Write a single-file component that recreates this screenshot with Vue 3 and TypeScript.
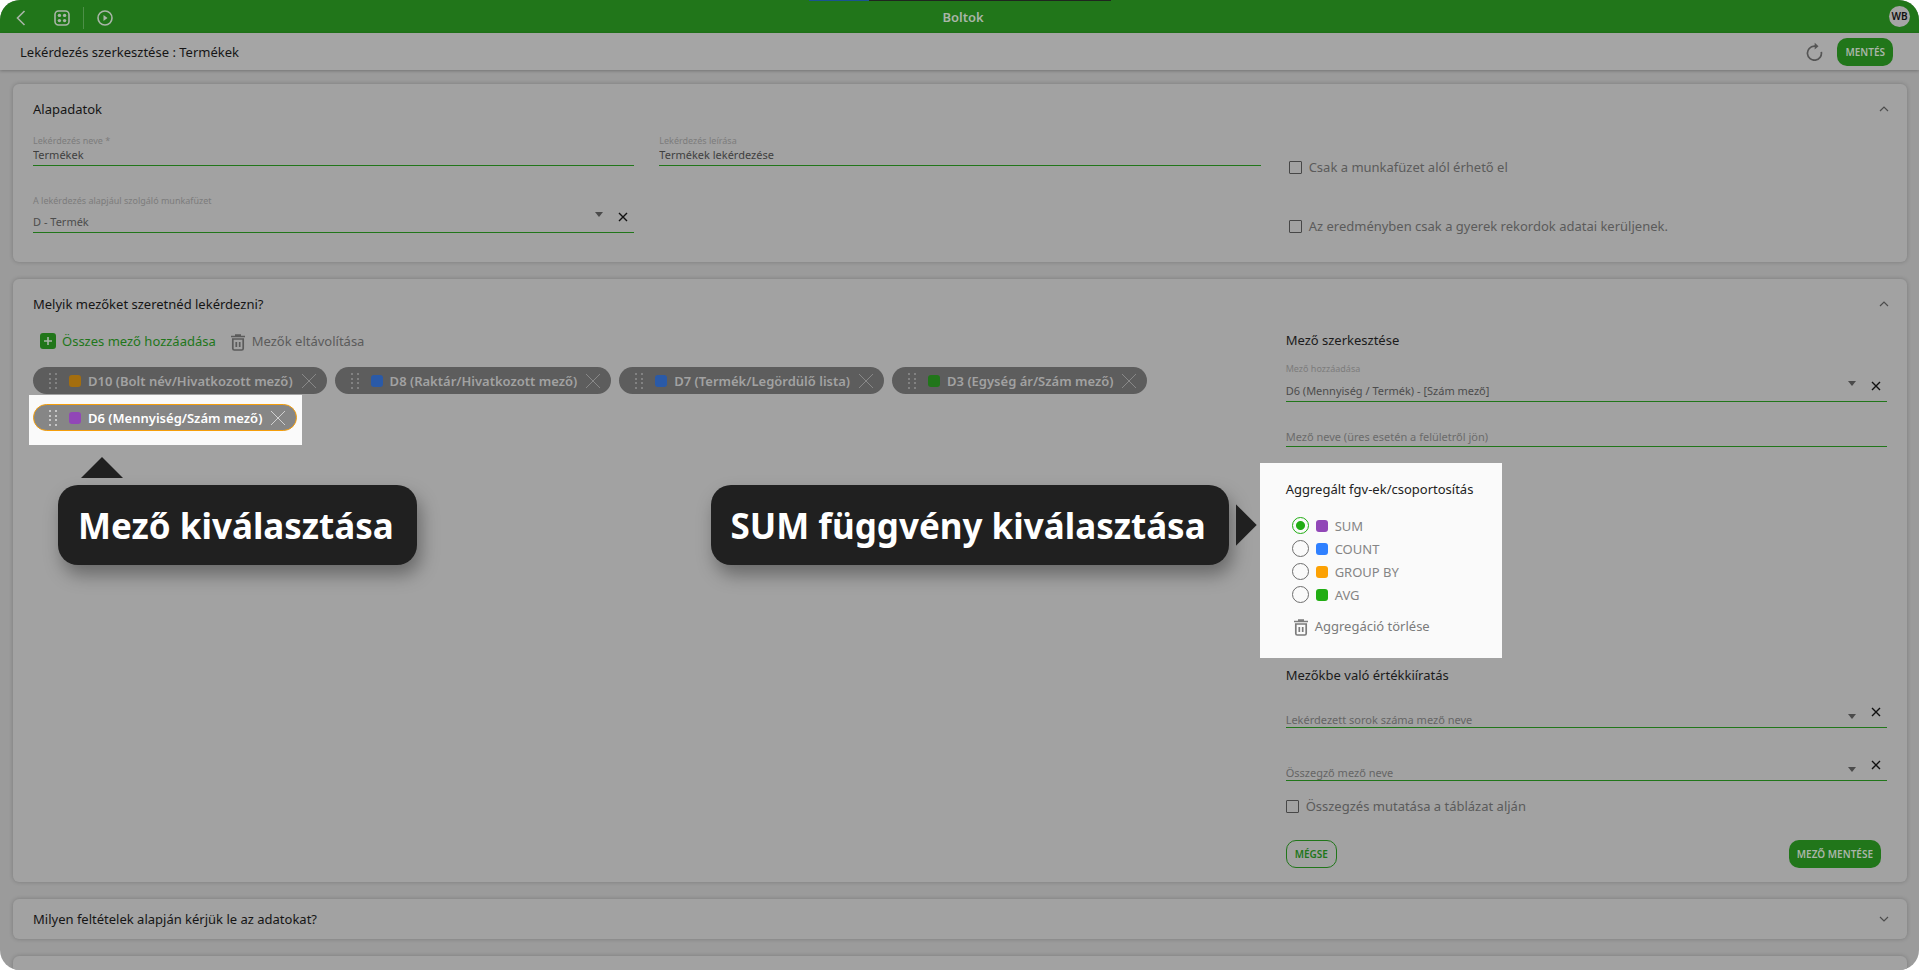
<script setup lang="ts">
import { ref } from 'vue'

interface Chip { text: string; color: string; selected?: boolean }

const chips: Chip[] = [
  { text: 'D10 (Bolt név/Hivatkozott mező)', color: 'orange' },
  { text: 'D8 (Raktár/Hivatkozott mező)', color: 'blue' },
  { text: 'D7 (Termék/Legördülő lista)', color: 'blue' },
  { text: 'D3 (Egység ár/Szám mező)', color: 'green' },
  { text: 'D6 (Mennyiség/Szám mező)', color: 'purple', selected: true },
]
const aggregates = [
  { name: 'SUM', color: 'purple' },
  { name: 'COUNT', color: 'blue' },
  { name: 'GROUP BY', color: 'orange' },
  { name: 'AVG', color: 'green' },
]
const aggregate = ref('SUM')
const queryName = ref('Termékek')
const description = ref('Termékek lekérdezése')
const fieldName = ref('')
const onlyWorkbook = ref(false)
const onlyChildren = ref(false)
const showTotal = ref(false)
</script>

<template>
  <div class="screen">
    <div class="strip" aria-hidden="true"><i></i></div>
    <header class="topbar">
      <nav class="tools">
        <button class="icon-btn back" aria-label="Vissza">
          <svg width="10" height="16" viewBox="0 0 10 16"><path d="M8.500 1 1.500 8l7 7" /></svg>
        </button>
        <button class="icon-btn grid" aria-label="Alkalmazások">
          <svg width="16" height="16" viewBox="0 0 16 16"><rect x="1" y="1" width="14" height="14" rx="3.500" /><g class="solid"><circle cx="5.400" cy="5.400" r="1.700" /><circle cx="10.600" cy="5.400" r="1.700" /><circle cx="5.400" cy="10.600" r="1.700" /><circle cx="10.600" cy="10.600" r="1.700" /></g></svg>
        </button>
        <button class="icon-btn play" aria-label="Futtatás">
          <svg width="16" height="16" viewBox="0 0 16 16"><circle cx="8" cy="8" r="7" /><path class="solid" d="M6.500 5v6l4-3z" /></svg>
        </button>
      </nav>
      <span class="app-name">Boltok</span>
      <span class="right"><span class="avatar">WB</span></span>
    </header>

    <div class="subbar">
      <h1>Lekérdezés szerkesztése : Termékek</h1>
      <div class="actions">
        <button class="icon-btn refresh" aria-label="Frissítés">
          <svg width="17" height="19" viewBox="0 0 17 19"><path d="M15.300 9.800A7 7 0 1 1 8.300 4.200h2" /><path class="solid" d="M8.700 .8v6.800l3.800-3.400z" /></svg>
        </button>
        <button class="btn filled">MENTÉS</button>
      </div>
    </div>

    <main>
      <section class="card basics">
        <div class="card-head">
          <h2>Alapadatok</h2>
          <button class="icon-btn" aria-label="Összecsukás"><svg class="chev" width="10" height="6" viewBox="0 0 10 6"><path d="M1 5l4-4 4 4" /></svg></button>
        </div>
        <div class="columns basics-grid">
          <div class="field">
            <label for="qname">Lekérdezés neve *</label>
            <input id="qname" v-model="queryName" type="text" />
          </div>
          <div class="field">
            <label for="qdesc">Lekérdezés leírása</label>
            <input id="qdesc" v-model="description" type="text" />
          </div>
          <label class="check"><input v-model="onlyWorkbook" type="checkbox" />Csak a munkafüzet alól érhető el</label>
          <div class="field tall">
            <label for="book">A lekérdezés alapjául szolgáló munkafüzet</label>
            <div class="pick">
              <select id="book"><option>D - Termék</option></select>
              <svg class="caret" width="8" height="5" viewBox="0 0 8 5"><path d="M0 0h8L4 5z" /></svg>
              <button class="icon-btn clear" aria-label="Törlés"><svg width="10" height="10" viewBox="0 0 10 10"><path d="M1 1l8 8M9 1L1 9" /></svg></button>
            </div>
          </div>
          <span></span>
          <label class="check"><input v-model="onlyChildren" type="checkbox" />Az eredményben csak a gyerek rekordok adatai kerüljenek.</label>
        </div>
      </section>

      <section class="card fields">
        <div class="card-head">
          <h2>Melyik mezőket szeretnéd lekérdezni?</h2>
          <button class="icon-btn" aria-label="Összecsukás"><svg class="chev" width="10" height="6" viewBox="0 0 10 6"><path d="M1 5l4-4 4 4" /></svg></button>
        </div>
        <div class="columns">
          <div class="selected-fields">
            <div class="links">
              <button class="link add">
                <svg width="16" height="16" viewBox="0 0 16 16"><rect width="16" height="16" rx="3" /><path d="M8 4v8M4 8h8" /></svg>Összes mező hozzáadása
              </button>
              <button class="link">
                <svg class="trash" width="14" height="17" viewBox="0 0 14 17"><path d="M0 2.500h14M4 1h6" /><path d="M1.800 5v9.500q0 1.500 1.500 1.500h7.400q1.500 0 1.500-1.500V5z" /><path d="M5.300 8v5M8.700 8v5" /></svg>Mezők eltávolítása
              </button>
            </div>
            <ul class="chips">
              <li v-for="chip in chips" :key="chip.text" class="chip" :class="{ selected: chip.selected }">
                <svg class="grip" width="10" height="18" viewBox="0 0 10 18"><path d="M0 2h2M6 2h2M0 7h2M6 7h2M0 11h2M6 11h2M0 16h2M6 16h2" /></svg>
                <i class="swatch" :class="chip.color"></i>
                <span class="chip-text">{{ chip.text }}</span>
                <button class="icon-btn" aria-label="Eltávolítás"><svg class="cross" width="16" height="16" viewBox="0 0 16 16"><path d="M1 1l14 14M15 1L1 15" /></svg></button>
                <div v-if="chip.selected" class="tip below">Mező kiválasztása</div>
              </li>
            </ul>
          </div>

          <form class="editor" @submit.prevent>
            <h3>Mező szerkesztése</h3>
            <div class="field tall">
              <label for="field">Mező hozzáadása</label>
              <div class="pick">
                <select id="field"><option>D6 (Mennyiség / Termék) - [Szám mező]</option></select>
                <svg class="caret" width="8" height="5" viewBox="0 0 8 5"><path d="M0 0h8L4 5z" /></svg>
                <button type="button" class="icon-btn clear" aria-label="Törlés"><svg width="10" height="10" viewBox="0 0 10 10"><path d="M1 1l8 8M9 1L1 9" /></svg></button>
              </div>
            </div>
            <input v-model="fieldName" class="name-input" type="text" placeholder="Mező neve (üres esetén a felületről jön)" aria-label="Mező neve" />

            <fieldset class="aggregates">
              <legend>Aggregált fgv-ek/csoportosítás</legend>
              <label v-for="item in aggregates" :key="item.name" class="radio">
                <input v-model="aggregate" type="radio" name="aggregate" :value="item.name" />
                <i class="swatch" :class="item.color"></i>{{ item.name }}
              </label>
              <button type="button" class="link">
                <svg class="trash" width="14" height="17" viewBox="0 0 14 17"><path d="M0 2.500h14M4 1h6" /><path d="M1.800 5v9.500q0 1.500 1.500 1.500h7.400q1.500 0 1.500-1.500V5z" /><path d="M5.300 8v5M8.700 8v5" /></svg>Aggregáció törlése
              </button>
              <div class="tip beside">SUM függvény kiválasztása</div>
            </fieldset>

            <h3>Mezőkbe való értékkiíratás</h3>
            <div class="pick empty first">
              <select aria-label="Lekérdezett sorok száma mező neve"><option>Lekérdezett sorok száma mező neve</option></select>
              <svg class="caret" width="8" height="5" viewBox="0 0 8 5"><path d="M0 0h8L4 5z" /></svg>
              <button type="button" class="icon-btn clear" aria-label="Törlés"><svg width="10" height="10" viewBox="0 0 10 10"><path d="M1 1l8 8M9 1L1 9" /></svg></button>
            </div>
            <div class="pick empty">
              <select aria-label="Összegző mező neve"><option>Összegző mező neve</option></select>
              <svg class="caret" width="8" height="5" viewBox="0 0 8 5"><path d="M0 0h8L4 5z" /></svg>
              <button type="button" class="icon-btn clear" aria-label="Törlés"><svg width="10" height="10" viewBox="0 0 10 10"><path d="M1 1l8 8M9 1L1 9" /></svg></button>
            </div>
            <label class="check total"><input v-model="showTotal" type="checkbox" />Összegzés mutatása a táblázat alján</label>
            <div class="form-actions">
              <button type="button" class="btn outline">MÉGSE</button>
              <button type="submit" class="btn filled">MEZŐ MENTÉSE</button>
            </div>
          </form>
        </div>
      </section>

      <section class="card closed">
        <h2>Milyen feltételek alapján kérjük le az adatokat?</h2>
        <button class="icon-btn" aria-label="Kinyitás"><svg class="chev" width="10" height="6" viewBox="0 0 10 6"><path d="M1 1l4 4 4-4" /></svg></button>
      </section>
      <section class="card closed"></section>
    </main>
  </div>
</template>

<style>
body { margin: 0; background: #fff; }
</style>

<style scoped>
* { box-sizing: border-box; }
.screen {
  --green: #21761a;
  position: relative;
  height: 100vh;
  overflow: hidden;
  border-radius: 20px;
  background: #9b9b9b;
  color: #151515;
  font-family: "Noto Sans", "Open Sans", sans-serif;
  font-size: 13px;
  line-height: 20px;
}
button, input, select { font: inherit; color: inherit; margin: 0; padding: 0; border: 0; background: none; border-radius: 0; }
button { cursor: pointer; }
h1, h2, h3 { margin: 0; font-size: 13px; font-weight: 400; line-height: 20px; }
svg { display: block; flex: none; fill: none; stroke: currentColor; }
.solid { fill: currentColor; stroke: none; }
.icon-btn { display: flex; align-items: center; justify-content: center; flex: none; }

.strip { position: absolute; top: 0; left: calc(50% - 151px); width: 302px; height: 1px; background: #1f261f; }
.strip i { display: block; width: 60px; height: 1px; background: #1a5391; }
.topbar { display: grid; grid-template-columns: 1fr auto 1fr; align-items: center; height: 33px; padding: 0 9px 0 16px; background: var(--green); color: #a9b5a8; }
.tools { display: flex; align-items: center; padding-top: 2px; }
.tools svg { stroke-width: 1.600; }
.grid { margin-left: 28px; padding-right: 13px; height: 22px; border-right: 1px solid #4d8f48; }
.play { margin-left: 13px; }
.app-name { font-weight: 600; }
.right { display: flex; justify-content: flex-end; }
.avatar { width: 21px; height: 21px; border-radius: 50%; background: #a5a5a5; color: #111; font-size: 10px; font-weight: 600; line-height: 21px; text-align: center; }
.subbar { position: relative; display: flex; align-items: center; justify-content: space-between; height: 37px; padding: 0 26px 0 20px; background: #a5a5a5; box-shadow: 0 1px 3px rgba(0, 0, 0, .25); }
.actions { display: flex; align-items: center; gap: 14px; }
.refresh { color: #555; }
.refresh svg { stroke-width: 1.700; }
.btn { height: 28px; padding: 0 8px; border-radius: 10px; font-size: 10px; font-weight: 600; }
.filled { background: var(--green); color: #a9b5a8; }
.outline { border: 1px solid var(--green); color: var(--green); }

main { display: flex; flex-direction: column; gap: 17px; padding: 14px 12px 0 13px; }
.card { padding: 15px 20px 0; border-radius: 6px; background: #a2a2a2; box-shadow: 0 0 4px rgba(0, 0, 0, .22); }
.basics { padding-bottom: 29px; }
.card-head, .closed { display: flex; justify-content: space-between; align-items: center; }
.card-head { margin-right: -2px; }
.chev { color: #4d4d4d; stroke-width: 1.200; }
.columns { display: grid; grid-template-columns: repeat(3, minmax(0, 1fr)); column-gap: 25px; }
.basics-grid { grid-template-rows: 47px 67px; }
.field { display: flex; flex-direction: column; justify-content: flex-end; }
.field label { color: #7c7c7c; font-size: 9px; line-height: 12px; }
.field input { height: 19px; padding-bottom: 3px; border-bottom: 1px solid var(--green); color: #3f3f3f; font-size: 11px; line-height: 15px; }
.pick { display: flex; align-items: flex-end; border-bottom: 1px solid var(--green); height: 26px; padding-right: 6px; color: #4c4c4c; font-size: 11px; }
.pick select { flex: 1; min-width: 0; height: 20px; appearance: none; line-height: 20px; outline: 0; }
.caret { fill: #4b4b4b; stroke: none; margin: 0 15px 15px 0; }
.clear { height: 10px; color: #111; margin-bottom: 10px; }
.clear svg { stroke-width: 1.400; }
.check { display: flex; align-items: center; gap: 7px; color: #5b5b5b; }
.check input { appearance: none; width: 13px; height: 13px; border: 1px solid #474747; border-radius: 1px; flex: none; }
.basics-grid .check { align-self: end; margin: 0 0 -11px 3px; }
.basics-grid .check:last-child { margin-bottom: -3px; }

.fields { padding-bottom: 14px; }
.fields .columns > .selected-fields { grid-column: span 2; }
.links { display: flex; gap: 15px; padding: 16px 7px 0; }
.link { display: flex; align-items: center; gap: 7px; color: #5b5b5b; line-height: 22px; }
.add { gap: 6px; color: var(--green); }
.add rect { fill: var(--green); stroke: none; }
.add path { stroke: #a9b5a8; stroke-width: 1.600; }
.trash { stroke-width: 1.700; margin-top: 2px; }
.chips { position: relative; isolation: isolate; display: flex; flex-wrap: wrap; gap: 10px 8px; margin: 15px 0 0; padding: 0; list-style: none; }
.chip { position: relative; display: flex; align-items: center; height: 27px; padding: 0 10px 0 16px; border-radius: 14px; background: #5d5d5d; color: #a2a2a2; font-weight: 600; }
.grip { stroke: #828282; stroke-width: 2; }
.swatch { flex: none; width: 12px; height: 12px; border-radius: 3px; }
.chip .swatch { margin: 0 7px 0 10px; }
.chip-text { margin-right: 8px; white-space: nowrap; }
.cross { stroke: #888; }
.orange { background: #a46e0e; }
.blue { background: #2a5aa8; }
.green { background: #21761a; }
.purple { background: #9147b7; }
.selected { background: #868686; color: #fff; border: 1px solid #f59e0b; padding: 0 10px 0 15px; }
.selected::before { content: ""; position: absolute; z-index: -1; inset: -10px -6px -15px -5px; background: #fafafa; }
.selected .grip { stroke: #c6c6c6; }
.selected .cross { stroke: #d0d0d0; }

.editor h3 { color: #1b1b1b; }
.editor { padding-top: 16px; }
.editor .field { margin-top: 13px; }
.editor .field .pick { height: 27px; }
.name-input { display: block; width: 100%; height: 19px; margin-top: 26px; border-bottom: 1px solid var(--green); font-size: 11px; }
.name-input::placeholder { color: #6b6b6b; opacity: 1; }
.aggregates { position: relative; z-index: 1; display: flex; flex-direction: column; align-items: flex-start; width: 242px; height: 195px; margin: 16px 0 7px -26px; padding: 16px 0 0 26px; border: 0; background: #fafafa; }
.aggregates legend { float: left; margin-bottom: 15px; padding: 0; color: #222; white-space: nowrap; }
.radio { display: flex; align-items: center; height: 23px; margin-left: 6px; color: #858585; }
.radio input { appearance: none; width: 17px; height: 17px; border: 1px solid #6e6e6e; border-radius: 50%; }
.radio input:checked { border-color: #21ad13; background: radial-gradient(circle, #21ad13 4px, transparent 5px); }
.radio .swatch { margin: 0 7px; }
.aggregates .blue { background: #2f80ff; }
.aggregates .orange { background: #fca103; }
.aggregates .green { background: #21ad13; }
.aggregates .link { margin: 9px 0 0 8px; color: #7b7b7b; }
.pick.empty { height: 24px; margin-top: 29px; color: #656565; }
.pick.first { margin-top: 19px; }
.pick.empty .caret { margin-bottom: 8px; }
.pick.empty select { height: 14px; line-height: 14px; }
.total { margin-top: 15px; }
.form-actions { display: flex; justify-content: space-between; margin-top: 24px; padding-right: 6px; }

.tip { position: absolute; height: 80px; padding: 0 23px 0 20px; border-radius: 20px; background: #202020; color: #fff; font-size: 35px; font-weight: 700; line-height: 82px; white-space: nowrap; box-shadow: 4px 10px 18px rgba(0, 0, 0, .35); }
.tip::before { content: ""; position: absolute; background: #202020; }
.below { left: 24px; top: 80px; }
.below::before { left: 23px; top: -28px; width: 42px; height: 21px; clip-path: polygon(50% 0, 100% 100%, 0 100%); }
.beside { top: 22px; right: calc(100% + 31px); }
.beside::before { right: -28px; top: 19px; width: 21px; height: 42px; clip-path: polygon(0 0, 100% 50%, 0 100%); }
.closed { height: 40px; padding: 0 18px 0 20px; flex: none; }
</style>
